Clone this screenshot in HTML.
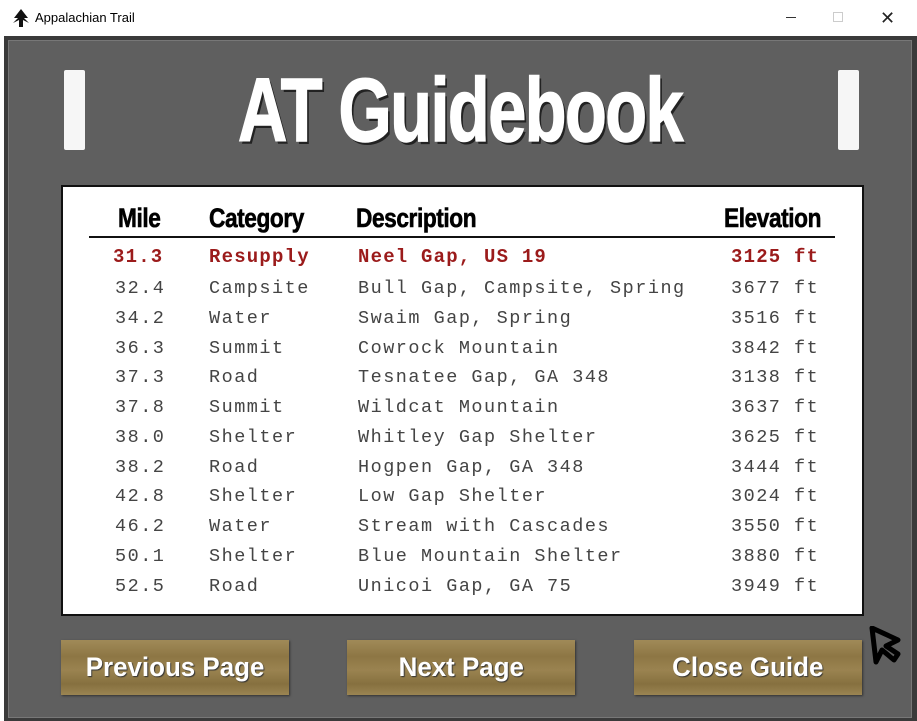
<!DOCTYPE html>
<html><head><style>
*{margin:0;padding:0;box-sizing:border-box}
body{width:917px;height:721px;background:#fff;position:relative;overflow:hidden;font-family:"Liberation Sans",sans-serif}
.tb{position:absolute;left:0;top:0;width:917px;height:36px;background:#fff}
.tb .t{position:absolute;left:35px;top:10px;font-size:13px;color:#000}
.main{position:absolute;left:4px;top:36px;width:913px;height:685px;background:#3a3a3a}
.inner{position:absolute;left:8px;top:40px;width:904px;height:678px;background:#5f5f5f;border:1px solid #777}
.bar{position:absolute;width:21px;height:80px;background:#f6f6f6;border-radius:2px}
.title{position:absolute;left:100px;top:66px;width:720px;text-align:center;white-space:nowrap;font-weight:bold;font-size:90px;line-height:90px;color:#fff;text-shadow:3px 3px 0 #222;letter-spacing:-2px;transform:scaleX(0.76);transform-origin:center;-webkit-text-stroke:1.5px #fff}
.panel{position:absolute;left:61px;top:185px;width:803px;height:431px;background:#fff;border:2px solid #111}
.h{position:absolute;top:203px;font-weight:bold;font-size:27px;color:#000;transform-origin:left;transform:scaleX(0.84);white-space:nowrap;letter-spacing:-0.5px;-webkit-text-stroke:0.6px #000}
.line{position:absolute;left:89px;top:236px;width:746px;height:2px;background:#111}
.r{position:absolute;font-family:"Liberation Mono",monospace;font-size:18.5px;color:#444;letter-spacing:1.5px;white-space:pre}
.red{color:#9b1b1b;font-weight:bold;font-size:19px;letter-spacing:1.2px}
.btn{position:absolute;top:640px;width:228px;height:55px;background:linear-gradient(180deg,#a08a58 0%,#8d7644 30%,#9a8350 55%,#86703f 80%,#9b8552 100%);box-shadow:1px 1px 2px #333;color:#fff;font-weight:bold;font-size:27px;text-align:center;line-height:55px;text-shadow:1px 1px 1px #333;white-space:nowrap}
.btn span{display:inline-block;transform:scaleX(0.96)}
</style></head><body>
<div class="tb">
<svg style="position:absolute;left:12px;top:8px" width="18" height="20" viewBox="0 0 18 20"><path d="M9 1 L2 10 L6 10 L1 15 L7 12 L7 19 L11 19 L11 12 L17 15 L12 10 L16 10 Z" fill="#111"/></svg>
<div class="t">Appalachian Trail</div>
<div style="position:absolute;left:786px;top:17px;width:10px;height:1px;background:#333"></div>
<div style="position:absolute;left:833px;top:12px;width:10px;height:10px;border:1px solid #ccc"></div>
<div style="position:absolute;left:880px;top:8px;font-size:18px;color:#222">✕</div>
</div>
<div class="main"></div>
<div class="inner"></div>
<div class="bar" style="left:64px;top:70px"></div>
<div class="bar" style="left:838px;top:70px"></div>
<div class="title">AT Guidebook</div>
<div class="panel"></div>
<div class="h" style="left:118px">Mile</div>
<div class="h" style="left:209px">Category</div>
<div class="h" style="left:356px">Description</div>
<div class="h" style="left:724px">Elevation</div>
<div class="line"></div>
<div class="r red" style="left:113px;top:246px">31.3</div><div class="r red" style="left:209px;top:246px">Resupply</div><div class="r red" style="left:358px;top:246px">Neel Gap, US 19</div><div class="r red" style="left:731px;top:246px">3125 ft</div>
<div class="r" style="left:115px;top:278px">32.4</div><div class="r" style="left:209px;top:278px">Campsite</div><div class="r" style="left:358px;top:278px">Bull Gap, Campsite, Spring</div><div class="r" style="left:731px;top:278px">3677 ft</div>
<div class="r" style="left:115px;top:308px">34.2</div><div class="r" style="left:209px;top:308px">Water</div><div class="r" style="left:358px;top:308px">Swaim Gap, Spring</div><div class="r" style="left:731px;top:308px">3516 ft</div>
<div class="r" style="left:115px;top:338px">36.3</div><div class="r" style="left:209px;top:338px">Summit</div><div class="r" style="left:358px;top:338px">Cowrock Mountain</div><div class="r" style="left:731px;top:338px">3842 ft</div>
<div class="r" style="left:115px;top:367px">37.3</div><div class="r" style="left:209px;top:367px">Road</div><div class="r" style="left:358px;top:367px">Tesnatee Gap, GA 348</div><div class="r" style="left:731px;top:367px">3138 ft</div>
<div class="r" style="left:115px;top:397px">37.8</div><div class="r" style="left:209px;top:397px">Summit</div><div class="r" style="left:358px;top:397px">Wildcat Mountain</div><div class="r" style="left:731px;top:397px">3637 ft</div>
<div class="r" style="left:115px;top:427px">38.0</div><div class="r" style="left:209px;top:427px">Shelter</div><div class="r" style="left:358px;top:427px">Whitley Gap Shelter</div><div class="r" style="left:731px;top:427px">3625 ft</div>
<div class="r" style="left:115px;top:457px">38.2</div><div class="r" style="left:209px;top:457px">Road</div><div class="r" style="left:358px;top:457px">Hogpen Gap, GA 348</div><div class="r" style="left:731px;top:457px">3444 ft</div>
<div class="r" style="left:115px;top:486px">42.8</div><div class="r" style="left:209px;top:486px">Shelter</div><div class="r" style="left:358px;top:486px">Low Gap Shelter</div><div class="r" style="left:731px;top:486px">3024 ft</div>
<div class="r" style="left:115px;top:516px">46.2</div><div class="r" style="left:209px;top:516px">Water</div><div class="r" style="left:358px;top:516px">Stream with Cascades</div><div class="r" style="left:731px;top:516px">3550 ft</div>
<div class="r" style="left:115px;top:546px">50.1</div><div class="r" style="left:209px;top:546px">Shelter</div><div class="r" style="left:358px;top:546px">Blue Mountain Shelter</div><div class="r" style="left:731px;top:546px">3880 ft</div>
<div class="r" style="left:115px;top:576px">52.5</div><div class="r" style="left:209px;top:576px">Road</div><div class="r" style="left:358px;top:576px">Unicoi Gap, GA 75</div><div class="r" style="left:731px;top:576px">3949 ft</div>
<div class="btn" style="left:61px"><span>Previous Page</span></div>
<div class="btn" style="left:347px"><span>Next Page</span></div>
<div class="btn" style="left:634px"><span>Close Guide</span></div>
<svg style="position:absolute;left:868px;top:626px" width="36" height="40" viewBox="0 0 36 40"><path d="M4 2 L8 36 L14 24 L26 34 L30 28 L18 20 L30 14 Z" fill="none" stroke="#000" stroke-width="5" stroke-linejoin="round"/></svg>
</body></html>
